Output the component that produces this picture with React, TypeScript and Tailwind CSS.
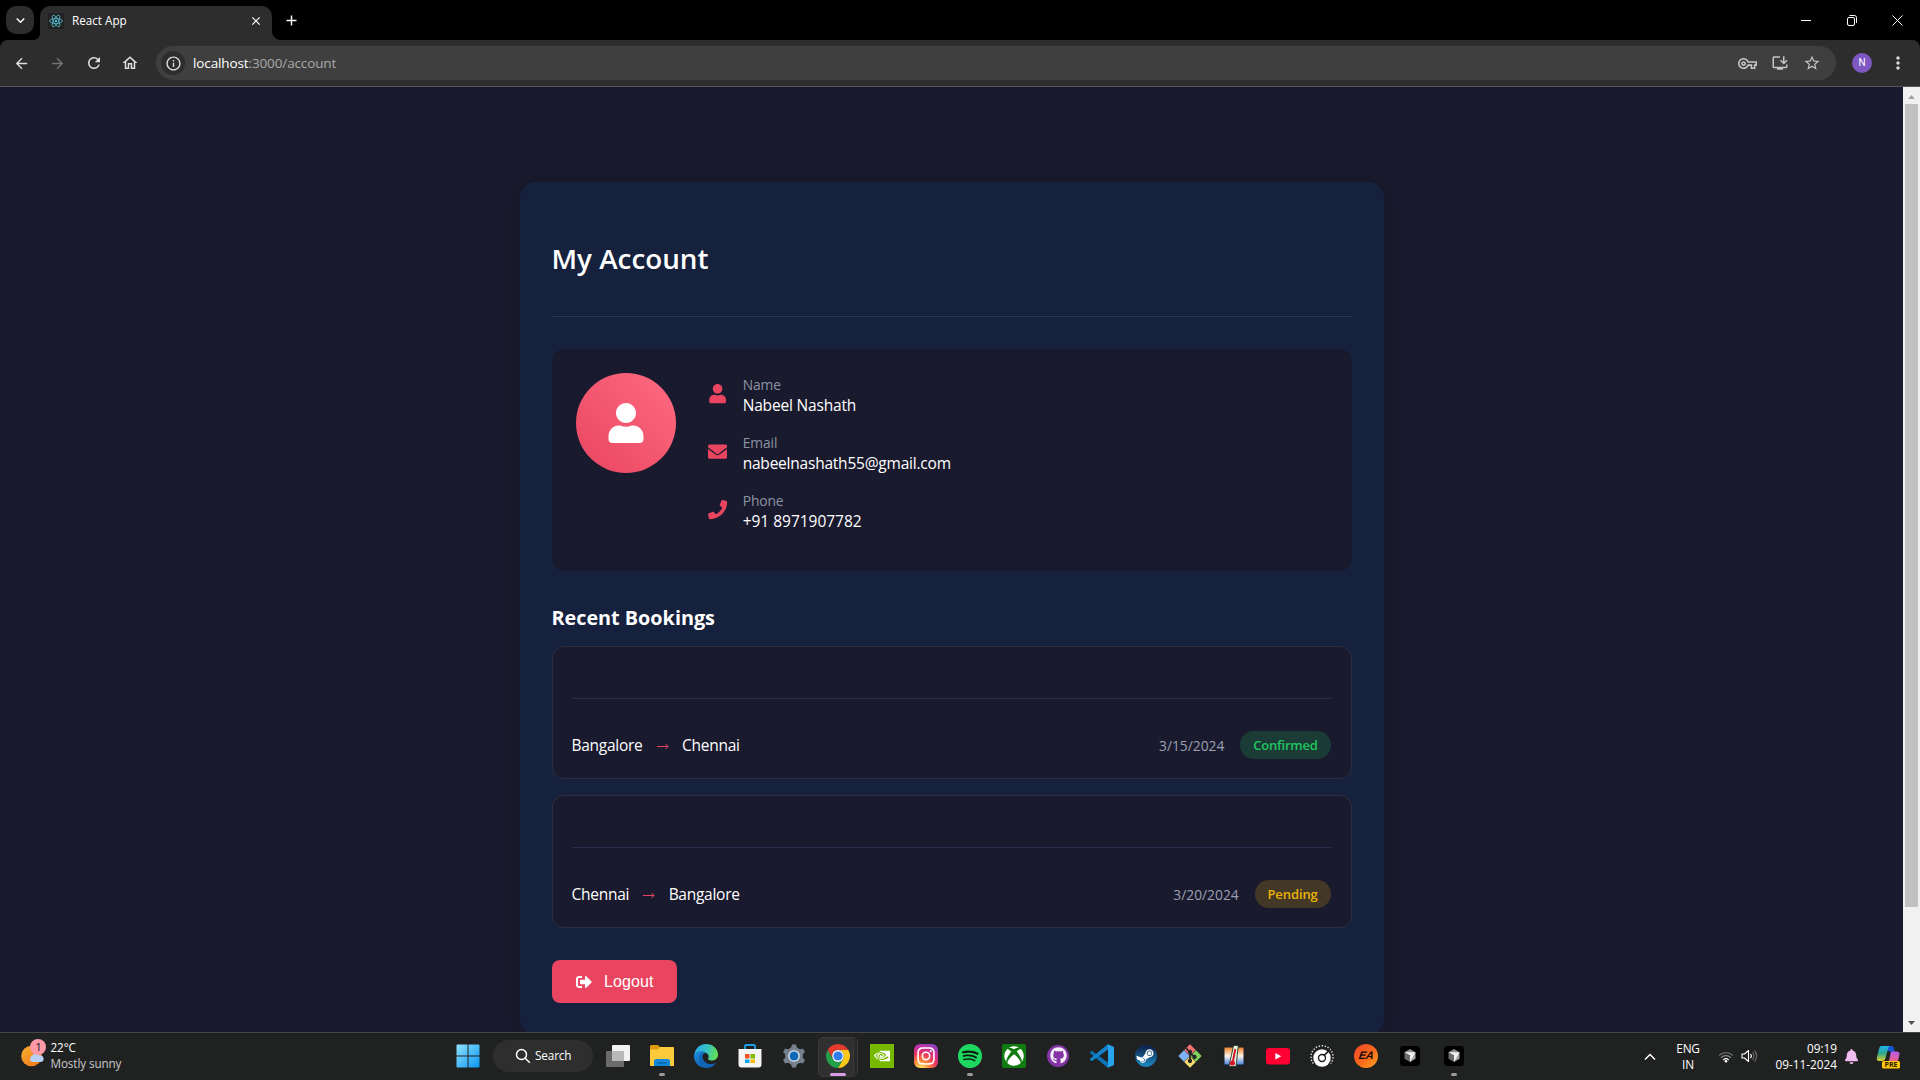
import React from "react";
import { FaUser, FaEnvelope, FaPhone, FaSignOutAlt, FaSpotify, FaXbox, FaGithub, FaSteam, FaInstagram, FaBell } from "react-icons/fa";
import {
  MdArrowBack,
  MdArrowForward,
  MdRefresh,
  MdOutlineHome,
  MdInfoOutline,
  MdOutlineVpnKey,
  MdOutlineInstallDesktop,
  MdStarBorder,
  MdMoreVert,
  MdClose,
  MdAdd,
  MdKeyboardArrowDown,
} from "react-icons/md";
import { SiNvidia } from "react-icons/si";

/* ---------- browser chrome ---------- */

function ReactLogo() {
  return (
    <svg width="14" height="14" viewBox="-12 -12 24 24" fill="none" stroke="#58c4dc" strokeWidth="1.3">
      <circle r="2" fill="#58c4dc" stroke="none" />
      <ellipse rx="11" ry="4.3" />
      <ellipse rx="11" ry="4.3" transform="rotate(60)" />
      <ellipse rx="11" ry="4.3" transform="rotate(120)" />
    </svg>
  );
}

function TabStrip() {
  return (
    <div className="flex h-10 items-start bg-black text-white">
      <div className="mt-1.5 ml-1.5 flex size-7 items-center justify-center rounded-[10px] bg-[#2d2d2d]">
        <MdKeyboardArrowDown size={17} />
      </div>
      <div className="flex h-10 items-end">
        <div className="size-1.5 bg-[radial-gradient(circle_at_0_0,#000_5.5px,#2d2d2d_6px)]" />
        <div className="mt-1.5 flex h-[34px] w-[232px] items-center self-start rounded-t-[10px] bg-[#2d2d2d] pb-1">
          <div className="ml-2 flex size-4 items-center justify-center bg-[#222222]">
            <ReactLogo />
          </div>
          <span className="ml-2 flex-1 text-[11.7px] leading-none">React App</span>
          <MdClose size={14} className="mr-[9px]" />
        </div>
        <div className="size-2 bg-[radial-gradient(circle_at_100%_0,#000_7.5px,#2d2d2d_8px)]" />
      </div>
      <MdAdd size={17} className="mt-[11.5px] ml-[3px]" />
      <div className="ml-auto flex h-10 items-center pr-[17.500px]">
        <svg width="102" height="12" viewBox="0 0 102 12" fill="none" stroke="#fff">
          <path d="M0 6.500h10" />
          <rect x="46.500" y="3.500" width="7" height="8" rx="1.500" />
          <path d="M48.500 1.500h5a2 2 0 0 1 2 2v5.500" />
          <path d="M91.500 1.500l10 10M101.500 1.500l-10 10" />
        </svg>
      </div>
    </div>
  );
}

function Toolbar() {
  return (
    <div className="bg-black">
      <div className="flex h-[47px] items-center rounded-t-[8px] border-b border-[#565656] bg-[#2d2d2d] text-[#dedede]">
        <MdArrowBack size={17} className="ml-[13px]" />
        <MdArrowForward size={17} className="ml-[19px] text-[#757575]" />
        <MdRefresh size={18} className="ml-[19px]" />
        <MdOutlineHome size={18} className="ml-[18px]" />
        <div className="ml-[17px] flex h-[34px] w-[1680px] items-center rounded-full bg-[#3f3f3f]">
          <div className="ml-[5px] flex size-6 items-center justify-center rounded-full bg-[#2d2d2d]">
            <MdInfoOutline size={17} />
          </div>
          <div className="ml-2 flex-1 pt-px text-[13.5px] leading-none tracking-[-0.12px] text-[#a9a9a9]">
            <span className="text-white">localhost</span>:3000/account
          </div>
          <div className="mr-[15px] flex items-center gap-[14px] text-[#c4c4c4]">
            <MdOutlineVpnKey size={19} />
            <MdOutlineInstallDesktop size={18} />
            <MdStarBorder size={18} />
          </div>
        </div>
        <div className="ml-4 flex size-5 items-center justify-center rounded-full bg-[#7e57c2] font-[Roboto] text-[10px] leading-none text-white">
          N
        </div>
        <MdMoreVert size={20} className="ml-4" />
      </div>
    </div>
  );
}

function Scrollbar() {
  return (
    <div className="flex w-[17px] flex-col items-center bg-[#f1f1f1]">
      <div className="flex h-[17px] items-center pt-0.5">
        <svg width="7" height="4">
          <path d="M0 4L3.500 0L7 4z" fill="#a3a3a3" />
        </svg>
      </div>
      <div className="h-[803px] w-[13px] bg-[#c1c1c1]" />
      <div className="mt-auto flex h-[18px] items-center">
        <svg width="7" height="4">
          <path d="M0 0L3.500 4L7 0z" fill="#505050" />
        </svg>
      </div>
    </div>
  );
}

/* ---------- account page ---------- */

const details = [
  { icon: FaUser, label: "Name", value: "Nabeel Nashath", tracking: "tracking-[-0.18px]" },
  { icon: FaEnvelope, label: "Email", value: "nabeelnashath55@gmail.com", tracking: "tracking-[-0.22px]" },
  { icon: FaPhone, label: "Phone", value: "+91 8971907782", tracking: "tracking-[-0.02px]" },
];

const bookings = [
  { from: "Bangalore", to: "Chennai", date: "3/15/2024", status: "Confirmed", chip: "bg-[#22c55e]/20 text-[#22c55e] tracking-[-0.2px]" },
  { from: "Chennai", to: "Bangalore", date: "3/20/2024", status: "Pending", chip: "bg-[#eab308]/20 text-[#eab308] tracking-[-0.1px]" },
];

function ProfileCard() {
  return (
    <div className="flex h-[222px] gap-8 rounded-xl bg-[#1a1a2e] p-6">
      <div className="flex size-[100px] items-center justify-center rounded-full bg-[linear-gradient(45deg,#e94560,#ff6b81)]">
        <FaUser size={40} color="#fff" />
      </div>
      <div className="flex flex-col gap-4">
        {details.map(({ icon: Icon, label, value, tracking }) => (
          <div key={label} className="flex h-[42px] items-center gap-4">
            <Icon size={19.2} color="#e94560" />
            <div className="flex flex-col pt-px">
              <span className="text-[13.8px] leading-[21px] tracking-[-0.1px] text-[#8b93a3]">{label}</span>
              <span className={"text-[15.5px] leading-[20px] text-white " + tracking}>{value}</span>
            </div>
          </div>
        ))}
      </div>
    </div>
  );
}

function BookingCard({ booking }: { booking: (typeof bookings)[number] }) {
  return (
    <div className="flex h-[133px] flex-col rounded-xl border border-[#302f42] bg-[#1a1a2e] pr-5 pl-[19px] text-white">
      <div className="h-[52px] border-b border-[#2d2d4f]" />
      <div className="mt-8 flex h-7 items-center">
        <span className="pt-0.5 text-[15.5px] tracking-[-0.27px]">{booking.from}</span>
        <svg width="12" height="7" viewBox="0 0 12 7" className="mr-[13.500px] ml-[14px] mt-0.5" fill="none" stroke="#e94560">
          <path d="M0 3.500h11M8.500 1l2.500 2.500L8.500 6" />
        </svg>
        <span className="pt-0.5 text-[15.5px] tracking-[-0.27px]">{booking.to}</span>
        <span className="mr-4 ml-auto pt-0.5 text-[13.8px] text-[#9aa0b0]">{booking.date}</span>
        <span className={"flex h-7 items-center rounded-full px-[12.800px] pt-0.5 text-[13px] font-semibold " + booking.chip}>
          {booking.status}
        </span>
      </div>
    </div>
  );
}

function AccountPage() {
  return (
    <div className="flex-1 overflow-hidden bg-[#1a1a2e] pt-[95px]">
      <div className="mx-auto h-[853px] w-[864px] rounded-2xl bg-[#16213e] p-8 shadow-[0_4px_20px_rgba(0,0,0,0.2)]">
        <div className="h-[103px] border-b border-white/10 pt-[25.5px]">
          <h1 className="text-[27.8px] leading-[37px] font-semibold text-white">My Account</h1>
        </div>
        <div className="mt-8">
          <ProfileCard />
        </div>
        <h2 className="mt-[33px] mb-[14px] text-[19.8px] leading-7 font-bold text-white">Recent Bookings</h2>
        <div className="flex flex-col gap-4">
          {bookings.map((b) => (
            <BookingCard key={b.date} booking={b} />
          ))}
        </div>
        <button className="mt-8 flex h-[43px] w-[125px] items-center gap-[12.500px] rounded-lg bg-[#e94560] pl-6 font-['Liberation_Sans',sans-serif] text-base tracking-[0.1px] text-white">
          <FaSignOutAlt size={16} />
          Logout
        </button>
      </div>
    </div>
  );
}

/* ---------- taskbar ---------- */

function WindowsIcon() {
  return (
    <svg width="24" height="24" viewBox="0 0 24 24">
      <defs>
        <linearGradient id="win" x1="0" y1="0" x2="1" y2="1">
          <stop offset="0" stopColor="#8fe3ff" />
          <stop offset="1" stopColor="#0a94f2" />
        </linearGradient>
      </defs>
      <path fill="url(#win)" d="M.5 1.500a1 1 0 0 1 1-1h10v11H.5zM12.500.5h10a1 1 0 0 1 1 1v10h-11zM.5 12.500h11v11h-10a1 1 0 0 1-1-1zM12.500 12.500h11v10a1 1 0 0 1-1 1h-10z" />
    </svg>
  );
}

function TaskViewIcon() {
  return (
    <svg width="24" height="24" viewBox="0 0 24 24">
      <rect x="0" y="7" width="18" height="16" rx="1" fill="#6b6b6b" />
      <rect x="6" y="1" width="18" height="16" rx="1" fill="#f2f2f2" />
      <path d="M6 7h12v10H7a1 1 0 0 1-1-1z" fill="#b9b9b9" />
    </svg>
  );
}

function ExplorerIcon() {
  return (
    <svg width="24" height="24" viewBox="0 0 24 24">
      <path d="M0 2.500A1.500 1.500 0 0 1 1.500 1H8l2.500 2.500V8H0z" fill="#dd9a0c" />
      <path d="M0 5.500h8l2-2.500h13a1 1 0 0 1 1 1v18H1a1 1 0 0 1-1-1z" fill="#fccb3c" />
      <path d="M4 22v-4.500A2.500 2.500 0 0 1 6.500 15h11a2.500 2.500 0 0 1 2.500 2.500V22z" fill="#1286d8" />
      <path d="M7.500 19h9" stroke="#0b62a8" strokeWidth="1.4" />
    </svg>
  );
}

function EdgeIcon() {
  return (
    <svg width="24" height="24" viewBox="0 0 24 24">
      <defs>
        <linearGradient id="edgeTop" x1="0" y1="0.3" x2="1" y2="0.5">
          <stop offset="0" stopColor="#2aa9e8" />
          <stop offset=".5" stopColor="#35c1c8" />
          <stop offset="1" stopColor="#66e04e" />
        </linearGradient>
        <linearGradient id="edgeLow" x1="0" y1="0" x2="1" y2="1">
          <stop offset="0" stopColor="#1b8fe0" />
          <stop offset="1" stopColor="#0c4a94" />
        </linearGradient>
      </defs>
      <path d="M0 12C1 4 6 0 12 0c7 0 12 5 12 10.500 0 4-3 6-6.500 6-3 0-4-1.200-3.200-2.300.6-.9.700-3.200-1.300-4.700C9 6.500 2 7.500 0 12z" fill="url(#edgeTop)" />
      <path d="M0 12c.8-4.500 8-6.500 12-3.200C8.500 9 7.500 13 9.200 16c2.200 4 7.500 5.500 12.500 3C19.500 22.300 16 24 12 24 5 24 0 18.500 0 12z" fill="url(#edgeLow)" />
      <path d="M5 14c0-3.500 3.500-5.800 7-5.200C8.500 9 7.500 13 9.200 16c2.200 4 7.500 5.500 12.500 3-2 3-5 4.500-7.700 4.600C9 23 5 19 5 14z" fill="#1165b8" />
    </svg>
  );
}

function StoreIcon() {
  return (
    <svg width="24" height="24" viewBox="0 0 24 24">
      <path d="M7 6V2.200A1.200 1.200 0 0 1 8.200 1h7.600A1.200 1.200 0 0 1 17 2.200V6" fill="none" stroke="#1ba0ea" strokeWidth="1.800" />
      <path d="M.5 5h23v15.500a3 3 0 0 1-3 3h-17a3 3 0 0 1-3-3z" fill="#f4f4f4" />
      <path d="M7 10h4.500v4.500H7z" fill="#f25022" />
      <path d="M12.500 10H17v4.500h-4.500z" fill="#7fba00" />
      <path d="M7 15.500h4.500V19H7z" fill="#00a4ef" />
      <path d="M12.500 15.500H17V19h-4.500z" fill="#ffb900" />
    </svg>
  );
}

function SettingsIcon() {
  const teeth = "M-3-8L-2-11.500h4L3-8zM-3 8L-2 11.500h4L3 8z";
  return (
    <svg width="24" height="24" viewBox="-12 -12 24 24">
      <g fill="#76818d">
        <circle r="9" />
        <path d={teeth} />
        <path d={teeth} transform="rotate(60)" />
        <path d={teeth} transform="rotate(120)" />
      </g>
      <circle r="5.800" fill="#e8edf1" />
      <circle r="4.500" fill="#1068b4" />
    </svg>
  );
}

function ChromeIcon() {
  return (
    <svg width="24" height="24" viewBox="-12 -12 24 24">
      <path d="M-10.390-6A12 12 0 0 1 10.390-6H0A6 6 0 0 0-5.200 3z" fill="#e33b2e" />
      <path d="M10.390-6A12 12 0 0 1 0 12L5.200 3A6 6 0 0 0 0-6z" fill="#fcc918" />
      <path d="M0 12A12 12 0 0 1-10.390-6L-5.200 3A6 6 0 0 0 5.200 3z" fill="#22a04a" />
      <circle r="5.900" fill="#fff" />
      <circle r="4.600" fill="#2f7de9" />
    </svg>
  );
}

function NvidiaIcon() {
  return (
    <div className="flex size-6 items-center justify-center bg-[#76b900]">
      <SiNvidia size={16} color="#fff" />
    </div>
  );
}

function InstagramIcon() {
  return (
    <div className="flex size-6 items-center justify-center rounded-[6px] bg-[radial-gradient(circle_at_28%_105%,#fed45b_8%,#fa8a3a_28%,#e8365f_52%,#c82fa0_72%,#6a4fd8_100%)]">
      <FaInstagram size={20} color="#fff" />
    </div>
  );
}

function SpotifyIcon() {
  return (
    <div className="flex size-6 items-center justify-center rounded-full bg-[radial-gradient(circle,#0d1a10_9px,#1ed760_11px)]">
      <FaSpotify size={24} color="#1ed760" />
    </div>
  );
}

function XboxIcon() {
  return (
    <div className="flex size-6 items-center justify-center rounded-[2px] bg-[#107c10]">
      <FaXbox size={20} color="#fff" />
    </div>
  );
}

function GithubIcon() {
  return (
    <div className="flex size-[22px] items-center justify-center rounded-full bg-[#8534a8]">
      <FaGithub size={17} color="#f5eef8" />
    </div>
  );
}

function VsCodeIcon() {
  return (
    <svg width="24" height="24" viewBox="0 0 24 24">
      <path d="M0 8.300L1.700 6.800 18 18.500V24L.2 9.300z" fill="#0a72b8" />
      <path d="M0 15.700l1.700 1.500L18 5.500V0L.2 14.700z" fill="#1283cc" />
      <path d="M17.200.1L24 3v18l-6.800 2.900c.5-.4.800-.9.800-1.600V1.700c0-.7-.3-1.200-.8-1.600z" fill="#27a4f0" />
    </svg>
  );
}

function SteamIcon() {
  return (
    <div className="flex size-[22px] items-center justify-center rounded-full bg-[radial-gradient(circle,#fff_9px,#14447c_10px)]">
      <svg width="0" height="0">
        <defs>
          <linearGradient id="steam" x1="0" y1="0" x2="0" y2="1">
            <stop offset="0" stopColor="#101b46" />
            <stop offset="1" stopColor="#1c8cc0" />
          </linearGradient>
        </defs>
      </svg>
      <FaSteam size={22} fill="url(#steam)" />
    </div>
  );
}

function GitIcon() {
  return (
    <svg width="24" height="24" viewBox="0 0 24 24">
      <path d="M12 .3L17.800 6 12 11.800 6.200 6z" fill="#f0716f" />
      <path d="M6 6.200l5.800 5.800L6 17.800.3 12z" fill="#7fb2f7" />
      <path d="M18 6.200l5.700 5.800-5.700 5.800L12.200 12z" fill="#7ed05f" />
      <path d="M12 12.200l5.800 5.800-5.800 5.700L6.200 18z" fill="#f8dc6f" />
      <g stroke="#262626" strokeWidth="1.700" fill="#262626">
        <path d="M8 4l4 4.500V18M12 9l4.500 4" fill="none" />
        <circle cx="12" cy="8" r="1.300" />
        <circle cx="16.500" cy="13" r="1.300" />
        <circle cx="12" cy="17" r="1.300" />
      </g>
    </svg>
  );
}

function ThermometerIcon() {
  return (
    <svg width="24" height="24" viewBox="0 0 24 24">
      <defs>
        <linearGradient id="heat" x1="0" y1="0" x2="0" y2="1">
          <stop offset="0" stopColor="#f07a20" />
          <stop offset=".5" stopColor="#fff4ea" />
          <stop offset="1" stopColor="#3c7fe0" />
        </linearGradient>
      </defs>
      <rect x="2" y="3" width="20" height="18" fill="url(#heat)" stroke="#14202c" />
      <path d="M11.500 1.500h4.800l-2.300 21H7z" fill="#eaf6e4" stroke="#1d3a22" strokeWidth=".9" />
      <path d="M13.300 5l-2.600 14" stroke="#d3182a" strokeWidth="2" />
      <circle cx="10.400" cy="19" r="2.600" fill="#d3182a" />
    </svg>
  );
}

function YoutubeIcon() {
  return (
    <svg width="24" height="24" viewBox="0 0 24 24">
      <rect x="0" y="4" width="24" height="16.500" rx="3" fill="#ff0033" />
      <path d="M9.300 9l6 3.200-6 3.300z" fill="#fff" />
    </svg>
  );
}

function DialIcon() {
  return (
    <svg width="24" height="24" viewBox="0 0 24 24">
      <path d="M3.300 19.500A11 11 0 1 1 20.700 19.500" fill="none" stroke="#eee" strokeWidth="1.400" strokeDasharray="1.300 1.700" />
      <circle cx="12" cy="14" r="8.700" fill="#fff" />
      <circle cx="12" cy="14" r="3.500" fill="none" stroke="#202020" strokeWidth="1.400" />
      <path d="M13.800 12L19.800 5.500" stroke="#202020" strokeWidth="1.800" />
    </svg>
  );
}

function EaIcon() {
  return (
    <div className="flex size-6 items-center justify-center rounded-full bg-[linear-gradient(135deg,#f0442c,#f96a1c_55%,#ffa51e)]">
      <span className="-skew-x-[20deg] font-['Liberation_Sans',sans-serif] text-[11px] leading-none font-bold tracking-[-0.3px] text-[#160a04]">EA</span>
    </div>
  );
}

function CubeIcon() {
  return (
    <svg width="20" height="20" viewBox="0 0 20 20">
      <rect width="20" height="20" rx="3.500" fill="#000" />
      <path d="M10 3l5.500 3.200L10 9.500 4.500 6.200z" fill="#8c8c8c" />
      <path d="M4.500 6.200L10 9.500V16l-5.500-3.200z" fill="#6a6a6a" />
      <path d="M15.500 6.200v6.600L10 16V9.500z" fill="#a6a6a6" />
      <path d="M4.500 6.200h11L10 16V9.300z" fill="#f0f0f0" />
    </svg>
  );
}

type TaskItem = { name: string; icon: () => React.ReactElement; state?: "running" | "active" };

const taskItems: TaskItem[] = [
  { name: "task-view", icon: TaskViewIcon },
  { name: "explorer", icon: ExplorerIcon, state: "running" },
  { name: "edge", icon: EdgeIcon },
  { name: "store", icon: StoreIcon },
  { name: "settings", icon: SettingsIcon },
  { name: "chrome", icon: ChromeIcon, state: "active" },
  { name: "nvidia", icon: NvidiaIcon },
  { name: "instagram", icon: InstagramIcon },
  { name: "spotify", icon: SpotifyIcon, state: "running" },
  { name: "xbox", icon: XboxIcon },
  { name: "github", icon: GithubIcon },
  { name: "vscode", icon: VsCodeIcon },
  { name: "steam", icon: SteamIcon },
  { name: "git", icon: GitIcon },
  { name: "thermometer", icon: ThermometerIcon },
  { name: "youtube", icon: YoutubeIcon },
  { name: "dial", icon: DialIcon },
  { name: "ea", icon: EaIcon },
  { name: "cube", icon: CubeIcon },
  { name: "cube-2", icon: CubeIcon, state: "running" },
];

function TaskButton({ item }: { item: TaskItem }) {
  const Icon = item.icon;
  return (
    <div className="relative flex h-10 w-11 items-center justify-center">
      {item.state === "active" && (
        <>
          <div className="absolute top-0 left-1 h-10 w-[38px] rounded-[5px] border border-[#383838] bg-[#292929]" />
          <div className="absolute top-0 left-0.5 h-10 w-9 rounded-[5px] border border-[#3a3a3a] bg-[#303030]" />
          <div className="absolute top-9 left-[14px] h-[3px] w-4 rounded-full bg-[#d99ce6]" />
        </>
      )}
      {item.state === "running" && <div className="absolute top-9 left-[19px] h-[3px] w-1.5 rounded-full bg-[#9a9a9a]" />}
      <div className="relative -top-px">
        <Icon />
      </div>
    </div>
  );
}

function Weather() {
  return (
    <div className="flex w-[446px] items-center pl-5">
      <svg width="28" height="30" viewBox="0 0 28 30" className="-mt-2 shrink-0">
        <defs>
          <linearGradient id="sun" x1="0" y1="0" x2="1" y2="1">
            <stop offset="0" stopColor="#f9b233" />
            <stop offset="1" stopColor="#ef7014" />
          </linearGradient>
        </defs>
        <circle cx="11.500" cy="18" r="10.300" fill="url(#sun)" />
        <path d="M12 24a3.500 3.500 0 0 1-.5-6 5 5 0 0 1 8-.5 3.300 3.300 0 0 1 1.500 6.500z" fill="#b7d0f5" />
        <circle cx="18" cy="9" r="8" fill="#ff99a8" />
        <text x="18.500" y="13" textAnchor="middle" fontSize="11.500" fill="#1a1a1a" fontFamily="Open Sans">
          1
        </text>
      </svg>
      <div className="-mt-[3px] ml-[2.500px] flex flex-col text-[11.7px] leading-4 tracking-[-0.1px]">
        <span className="text-white">22°C</span>
        <span className="text-[#c9c9c9]">Mostly sunny</span>
      </div>
    </div>
  );
}

function Tray() {
  return (
    <div className="ml-auto flex items-center text-[11.8px] leading-4 text-white">
      <svg width="12" height="8" viewBox="0 0 12 8" fill="none" stroke="#fff" strokeWidth="1.500">
        <path d="M1 6.500l5-5 5 5" />
      </svg>
      <div className="-mt-0.5 ml-5 flex w-6 flex-col items-center tracking-[-0.2px]">
        <span>ENG</span>
        <span>IN</span>
      </div>
      <svg width="16" height="13" viewBox="0 0 16 13" fill="none" className="-mt-px ml-[18px]">
        <path d="M1 5.500a10 10 0 0 1 14 0" stroke="#6a6a6a" strokeWidth="1.200" />
        <path d="M3 7.800a7 7 0 0 1 10 0" stroke="#8a8a8a" strokeWidth="1.200" />
        <path d="M5.300 9.900a4 4 0 0 1 5.400 0" stroke="#fff" strokeWidth="1.300" />
        <circle cx="8" cy="11.300" r="1.300" fill="#fff" />
      </svg>
      <svg width="18" height="14" viewBox="0 0 18 14" fill="none" stroke="#fff" strokeWidth="1.100" className="-mt-px ml-[7px]">
        <path d="M1 5h2.500L7.500 1.500v11L3.500 9H1z" strokeLinejoin="round" />
        <path d="M9.500 5a3 3 0 0 1 0 4" />
        <path d="M11.500 3.200a5.500 5.500 0 0 1 0 7.600M13.500 1.500a8 8 0 0 1 0 11" stroke="#6a6a6a" />
      </svg>
      <div className="-mt-0.5 ml-[14px] flex w-[64px] flex-col items-end">
        <span>09:19</span>
        <span>09-11-2024</span>
      </div>
      <FaBell size={15} color="#f0bdf0" className="ml-[7px]" />
      <svg width="24" height="24" viewBox="0 0 24 24" className="mr-5 ml-[17px]">
        <defs>
          <linearGradient id="copA" x1="0" y1="0" x2="0" y2="1">
            <stop offset="0" stopColor="#1fb4f0" />
            <stop offset=".5" stopColor="#2fa88c" />
            <stop offset="1" stopColor="#e3cf2c" />
          </linearGradient>
          <linearGradient id="copB" x1="0" y1="0" x2="0" y2="1">
            <stop offset="0" stopColor="#b65cf0" />
            <stop offset="1" stopColor="#f5606c" />
          </linearGradient>
        </defs>
        <path d="M10 1h5.500c1.500 0 2 1 2.500 3l.8 2.500h-5L10 5z" fill="#1556d6" />
        <path d="M15 6.500h5.500c2.500 0 3.500 1.500 2.800 4l-1.300 5c-.6 2-1.500 2.500-3 2.500h-6.500z" fill="url(#copB)" />
        <path d="M5.500 1h9c-1.500 0-2 1-2.500 3L9.500 13c-.6 2.200-1.500 3-3.500 3H3.500C1 16 .2 14.500 1 12L3 4c.5-2 1-3 2.500-3z" fill="url(#copA)" />
        <rect x="6" y="16" width="18" height="7.500" rx="1.500" fill="#ffc60a" />
        <text x="15" y="22.300" textAnchor="middle" fontSize="7" fontWeight="700" fill="#2a2000" fontFamily="Open Sans">
          PRE
        </text>
      </svg>
    </div>
  );
}

function Taskbar() {
  return (
    <div className="flex h-12 items-center border-t border-[#474747] bg-[#202121]">
      <Weather />
      <div className="flex items-center">
        <div className="-mt-px ml-[9.500px]">
          <WindowsIcon />
        </div>
        <div className="-mt-px mr-[3px] ml-[13.500px] flex h-8 w-[100px] items-center rounded-full bg-[#2e2e2f] pl-[22px] text-white">
          <svg width="16" height="16" viewBox="0 0 16 16" fill="none" stroke="#fff" strokeWidth="1.500">
            <circle cx="6.500" cy="6.500" r="5" />
            <path d="M10.200 10.200l4.600 4.600" />
          </svg>
          <span className="ml-1 text-[11.8px] leading-none tracking-[-0.15px]">Search</span>
        </div>
        {taskItems.map((item) => (
          <TaskButton key={item.name} item={item} />
        ))}
      </div>
      <Tray />
    </div>
  );
}

export default function App() {
  return (
    <div className="flex h-screen w-full flex-col overflow-hidden font-['Open_Sans',sans-serif]">
      <TabStrip />
      <Toolbar />
      <div className="flex h-[945px] overflow-hidden">
        <AccountPage />
        <Scrollbar />
      </div>
      <Taskbar />
    </div>
  );
}
